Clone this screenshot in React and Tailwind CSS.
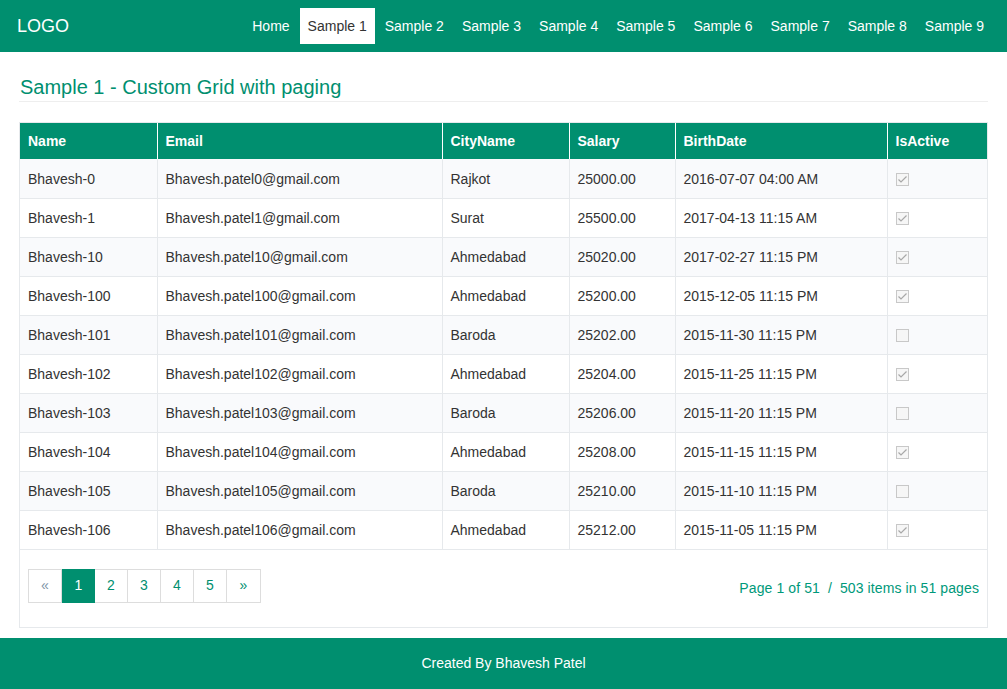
const rows = [
    ["Bhavesh-0", "Bhavesh.patel0@gmail.com", "Rajkot", "25000.00", "2016-07-07 04:00 AM", true],
    ["Bhavesh-1", "Bhavesh.patel1@gmail.com", "Surat", "25500.00", "2017-04-13 11:15 AM", true],
    ["Bhavesh-10", "Bhavesh.patel10@gmail.com", "Ahmedabad", "25020.00", "2017-02-27 11:15 PM", true],
    ["Bhavesh-100", "Bhavesh.patel100@gmail.com", "Ahmedabad", "25200.00", "2015-12-05 11:15 PM", true],
    ["Bhavesh-101", "Bhavesh.patel101@gmail.com", "Baroda", "25202.00", "2015-11-30 11:15 PM", false],
    ["Bhavesh-102", "Bhavesh.patel102@gmail.com", "Ahmedabad", "25204.00", "2015-11-25 11:15 PM", true],
    ["Bhavesh-103", "Bhavesh.patel103@gmail.com", "Baroda", "25206.00", "2015-11-20 11:15 PM", false],
    ["Bhavesh-104", "Bhavesh.patel104@gmail.com", "Ahmedabad", "25208.00", "2015-11-15 11:15 PM", true],
    ["Bhavesh-105", "Bhavesh.patel105@gmail.com", "Baroda", "25210.00", "2015-11-10 11:15 PM", false],
    ["Bhavesh-106", "Bhavesh.patel106@gmail.com", "Ahmedabad", "25212.00", "2015-11-05 11:15 PM", true],
];

const navItems = ["Home", "Sample 1", "Sample 2", "Sample 3", "Sample 4", "Sample 5", "Sample 6", "Sample 7", "Sample 8", "Sample 9"];

const Check = ({ checked }) => (
    <span className="flex w-[13px] h-[13px] border border-[#c8c8c8] bg-[#f6f6f6] items-center justify-center">
        {checked && (
            <svg width="11" height="11" viewBox="0 0 11 11">
                <path d="M1.5 5.5 L4 8 L9.5 2.5" fill="none" stroke="#a8a8a8" strokeWidth="1.2" />
            </svg>
        )}
    </span>
);

export default function App() {
    return (
        <div className="font-['Liberation_Sans',Arial,sans-serif] text-[14px] text-[#333] bg-white min-h-[689px]">
            <div className="h-[52px] bg-[#008f6f] flex items-center pl-[17px] pr-[15px]">
                <p className="text-white text-[18px]">LOGO</p>
                <div className="ml-auto flex gap-[2px]">
                    {navItems.map(item => (
                        <div key={item}
                            className={item === "Sample 1"
                                ? "h-[36px] px-2 flex items-center bg-white text-[#333]"
                                : "h-[36px] px-2 flex items-center text-white"}>
                            {item}
                        </div>
                    ))}
                </div>
            </div>

            <div className="px-[19px]">
                <h1 className="mt-[23px] pl-px pb-[2px] text-[20px] leading-[24px] text-[#008f6f] border-b border-[#eee]">
                    Sample 1 - Custom Grid with paging
                </h1>

                <div className="mt-[20px] border border-[#e6e9ec]">
                    <table className="w-full border-collapse table-fixed">
                        <colgroup>
                            <col className="w-[137px]" />
                            <col className="w-[285px]" />
                            <col className="w-[127px]" />
                            <col className="w-[106px]" />
                            <col className="w-[212px]" />
                            <col />
                        </colgroup>
                        <thead>
                            <tr className="bg-[#008f6f] text-white h-[36px]">
                                {["Name", "Email", "CityName", "Salary", "BirthDate", "IsActive"].map((h, i) => (
                                    <th key={h} className={i === 0
                                        ? "text-left font-bold pl-[8px]"
                                        : "text-left font-bold pl-[8px] border-l border-white"}>{h}</th>
                                ))}
                            </tr>
                        </thead>
                        <tbody>
                            {rows.map((r, index) => (
                                <tr key={r[0]} className={index % 2 === 0 ? "h-[39px] bg-[#f9fafc] border-b border-[#e6e9ec]" : "h-[39px] bg-white border-b border-[#e6e9ec]"}>
                                    <td className="pl-[8px] pt-[2px]">{r[0]}</td>
                                    <td className="pl-[8px] pt-[2px] border-l border-[#e6e9ec]">{r[1]}</td>
                                    <td className="pl-[8px] pt-[2px] border-l border-[#e6e9ec]">{r[2]}</td>
                                    <td className="pl-[8px] pt-[2px] border-l border-[#e6e9ec]">{r[3]}</td>
                                    <td className="pl-[8px] pt-[2px] border-l border-[#e6e9ec]">{r[4]}</td>
                                    <td className="pl-[8px] pt-[2px] border-l border-[#e6e9ec]"><Check checked={r[5]} /></td>
                                </tr>
                            ))}
                        </tbody>
                    </table>

                    <div className="flex items-center pl-[8px] pr-[8px] pt-[19px] pb-[24px]">
                        <div className="flex">
                            <span className="w-[34px] h-[34px] flex items-center justify-center border border-[#ddd] text-[#7f95a8]">«</span>
                            <span className="w-[33px] h-[34px] flex items-center justify-center bg-[#008f6f] border border-[#008f6f] text-white">1</span>
                            {["2", "3", "4", "5"].map(p => (
                                <span key={p} className="w-[33px] h-[34px] flex items-center justify-center border border-l-0 border-[#ddd] text-[#008f6f]">{p}</span>
                            ))}
                            <span className="w-[34px] h-[34px] flex items-center justify-center border border-l-0 border-[#ddd] text-[#008f6f]">»</span>
                        </div>
                        <p className="ml-auto mt-[6px] text-[#00997a] whitespace-pre tracking-[0.1px]">Page 1 of 51  /  503 items in 51 pages</p>
                    </div>
                </div>
            </div>

            <div className="mt-[10px] h-[51px] bg-[#008f6f] text-white flex items-center justify-center">
                Created By Bhavesh Patel
            </div>
        </div>
    );
}
